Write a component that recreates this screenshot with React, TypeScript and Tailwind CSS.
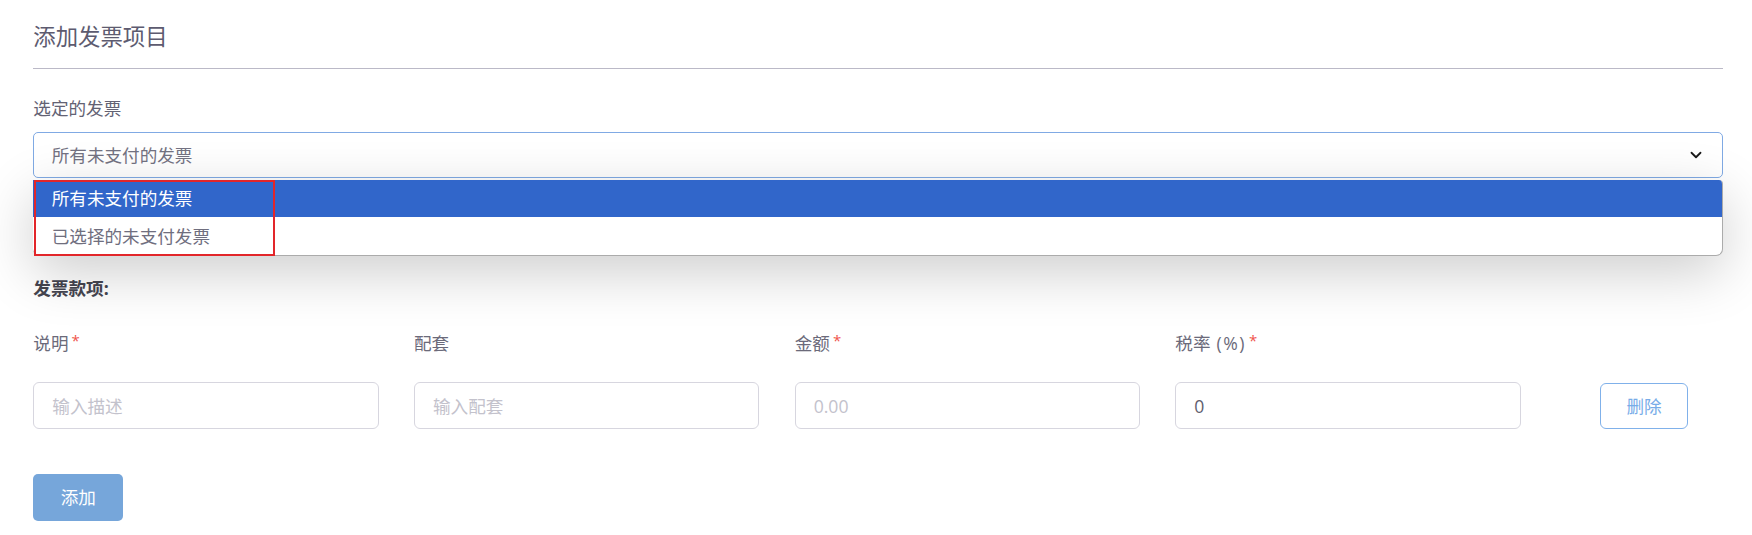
import { ChevronDown } from 'lucide-react';

export default function App() {
  const fields = [
    { label: '说明', required: true, placeholder: '输入描述', value: '' },
    { label: '配套', required: false, placeholder: '输入配套', value: '' },
    { label: '金额', required: true, placeholder: '0.00', value: '' },
    { label: '税率 (%)', required: true, placeholder: '', value: '0' },
  ];

  return (
    <div className="min-h-[535px] w-full bg-white font-['Open_Sans','Noto_Sans_CJK_SC',sans-serif] text-[17.6px]">
      <div className="pl-[33.3px] pr-[29.3px] pt-[23px]">
        <h2 className="text-[22.4px] leading-[28px] text-[#5d5b70]">添加发票项目</h2>
        <div className="mt-[17px] h-px bg-[#bbb9c7]" />

        <div className="mt-[26.5px] leading-[24px] text-[#636273]">选定的发票</div>

        {/* select, opened */}
        <div className="relative mt-[12px]">
          <div className="flex h-[46.6px] items-center justify-between rounded-[5px] border border-[#80aae4] bg-white pl-[17.4px] pr-[17px]">
            <span className="text-[#737282]">所有未支付的发票</span>
            <ChevronDown className="h-[18px] w-[18px] text-[#1a1a1a]" strokeWidth={2.4} />
          </div>

          <div className="absolute left-0 right-0 top-[calc(100%+1.5px)] z-10 overflow-hidden rounded-b-[7px] rounded-tr-[4px] border-r border-b border-[#ababab] bg-white shadow-[0_16px_56px_rgba(0,0,0,0.2)]">
            <div className="flex h-[37.5px] items-center bg-[#3166ca] pl-[18.4px] text-white">所有未支付的发票</div>
            <div className="flex h-[37.5px] items-center pl-[18.4px] text-[#6f6e7e]">已选择的未支付发票</div>
          </div>
          <div className="pointer-events-none absolute left-[0.7px] top-[calc(100%+1.5px)] z-20 h-[76px] w-[240.7px] border-2 border-[#e2262a]" />
        </div>

        <div className="mt-[97.5px] font-bold leading-[24px] text-[#454550]">发票款项:</div>

        <div className="mt-[31.5px] flex items-end gap-[35.3px]">
          {fields.map((f) => (
            <div key={f.label} className="flex w-[345.4px] flex-col">
              <div className="flex leading-[24px] text-[#6b6a7a]">
                {f.label.startsWith('税率') ? (
                  <>
                    税率<span className="ml-[6px] tracking-[1.5px]">(%)</span>
                  </>
                ) : (
                  f.label
                )}
                {f.required && <span className="ml-[3px] -mt-[3px] text-[15px] text-[#f0554c]">*</span>}
              </div>
              <input
                readOnly
                value={f.value}
                placeholder={f.placeholder}
                className="mt-[27.2px] h-[46.6px] rounded-[6px] border border-[#d7d6df] bg-white pl-[18px] text-[17.6px] text-[#5f5e6e] outline-none placeholder:text-[#c3c2cc]"
              />
            </div>
          ))}
          <button className="ml-[44px] h-[46px] w-[88px] rounded-[6px] border border-[#80b1ea] bg-white text-[#78ace8]">
            删除
          </button>
        </div>

        <button className="mt-[44.7px] h-[47px] w-[90px] rounded-[5px] bg-[#76a6da] text-white">添加</button>
      </div>
    </div>
  );
}
